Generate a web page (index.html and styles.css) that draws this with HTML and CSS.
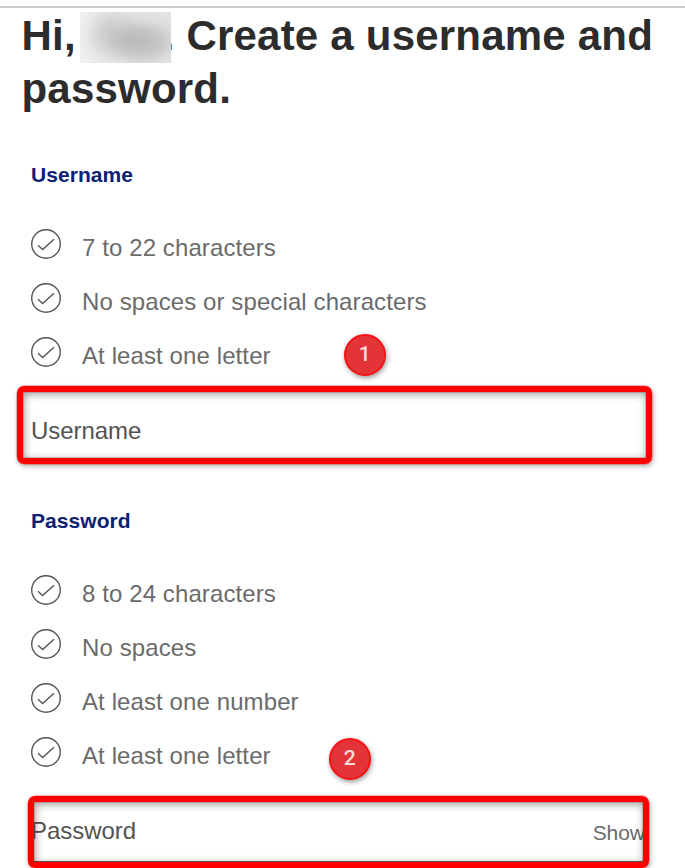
FILE: index.html
```html
<!DOCTYPE html>
<html lang="en">
<head>
<meta charset="utf-8">
<title>Create a username and password</title>
<link rel="stylesheet" href="styles.css">
</head>
<body>
<svg class="defs" width="0" height="0" aria-hidden="true">
  <symbol id="check" viewBox="0 0 30 30">
    <circle cx="15" cy="15" r="14.3"/>
    <path d="M7 16.2 11.6 20.5 23 10.2"/>
  </symbol>
</svg>
<main class="page">
  <h1 class="title">Hi, <span class="name"></span>. Create a username and<br>password.</h1>

  <section class="group">
    <h2 class="label">Username</h2>
    <ul class="rules">
      <li class="rule"><svg class="icon"><use href="#check"/></svg>7 to 22 characters</li>
      <li class="rule"><svg class="icon"><use href="#check"/></svg>No spaces or special characters</li>
      <li class="rule"><svg class="icon"><use href="#check"/></svg>At least one letter<span class="badge badge-one">1</span></li>
    </ul>
    <div class="field">
      <span>Username</span>
      <div class="highlight highlight-username"></div>
    </div>
  </section>

  <section class="group">
    <h2 class="label">Password</h2>
    <ul class="rules">
      <li class="rule"><svg class="icon"><use href="#check"/></svg>8 to 24 characters</li>
      <li class="rule"><svg class="icon"><use href="#check"/></svg>No spaces</li>
      <li class="rule"><svg class="icon"><use href="#check"/></svg>At least one number</li>
      <li class="rule"><svg class="icon"><use href="#check"/></svg>At least one letter<span class="badge badge-two">2</span></li>
    </ul>
    <div class="field">
      <span>Password</span>
      <span class="show">Show</span>
      <div class="highlight highlight-password"></div>
    </div>
  </section>
</main>
</body>
</html>
```
FILE: styles.css
```css
* { box-sizing: border-box; }

body {
  margin: 0;
  height: 868px;
  overflow: hidden;
  background: #fff;
  font-family: "Liberation Sans", Arial, sans-serif;
}

.defs { display: block; }

.page {
  margin-top: 6px;
  border-top: 2px solid #ccc;
  padding-top: 1px;
}

.title {
  position: relative;
  margin: 0;
  padding-left: 21.5px;
  color: #2c2c2c;
  font-size: 42px;
  line-height: 53px;
  letter-spacing: 0.21px;
  white-space: nowrap;
}

.name {
  display: inline-block;
  width: 75px;
}

/* Blurred patch that hides the customer's name */
.name::after {
  content: "";
  position: absolute;
  left: 80px;
  top: 3px;
  width: 91px;
  height: 51px;
  background:
    radial-gradient(ellipse 46px 30px at 62px 30px, rgba(160, 160, 160, 0.6), rgba(165, 165, 165, 0.45) 40%, rgba(190, 190, 190, 0.15) 75%, transparent),
    radial-gradient(ellipse 36px 34px at 32px 22px, rgba(170, 170, 170, 0.5), rgba(175, 175, 175, 0.35) 40%, rgba(190, 190, 190, 0.12) 75%, transparent),
    linear-gradient(90deg, #f0f0f0, #e4e4e4 55%, #e2e2e2);
}

.group { padding: 48px 40px 0 31px; }
.group + .group { padding-top: 47px; }

.label {
  margin: 0 0 34px;
  color: #0c2074;
  font-size: 21px;
  line-height: 24px;
  letter-spacing: 0.06px;
}

.rules {
  margin: 0;
  padding: 0;
  list-style: none;
}

.rule {
  position: relative;
  display: flex;
  gap: 21px;
  height: 54px;
  color: #6b6b6b;
  font-size: 24px;
  line-height: 54px;
  letter-spacing: 0.1px;
}

.icon {
  width: 30px;
  height: 30px;
  margin-top: 8px;
  fill: none;
  stroke: #555;
  stroke-width: 1.4;
}

.badge {
  position: absolute;
  width: 42px;
  height: 42px;
  border: 2px solid #fb0f14;
  border-radius: 50%;
  background: #e33538;
  box-shadow: 1px 2px 5px rgba(0, 0, 0, 0.4);
  color: #fbdcdc;
  font: 500 21px/37px Roboto, sans-serif;
  text-align: center;
}

.badge-one {
  left: 312.7px;
  top: 4.7px;
}

.badge-two {
  left: 297.7px;
  top: 8.7px;
}

.field {
  position: relative;
  display: flex;
  justify-content: space-between;
  height: 79px;
  padding-top: 21px;
  border-bottom: 1px solid #555;
  color: #535353;
  font-size: 24px;
  line-height: 54px;
  letter-spacing: -0.05px;
}

.show {
  color: #6b6b6b;
  font-size: 21px;
  line-height: 58px;
}

/* Red callout frames around the inputs */
.highlight {
  position: absolute;
  border: 6px solid #f00;
  border-radius: 7px;
  box-shadow:
    0 0 0 0.5px rgba(255, 0, 0, 0.5),
    1px 2px 5px rgba(0, 0, 0, 0.35),
    inset 0 0 0 0.5px rgba(150, 60, 60, 0.5),
    inset 1px 2px 8px rgba(0, 0, 0, 0.42);
}

.highlight-username {
  left: -14px;
  top: 3px;
  width: 635px;
  height: 78px;
}

.highlight-password {
  left: -3px;
  top: 13px;
  width: 621px;
  height: 72px;
}
```
